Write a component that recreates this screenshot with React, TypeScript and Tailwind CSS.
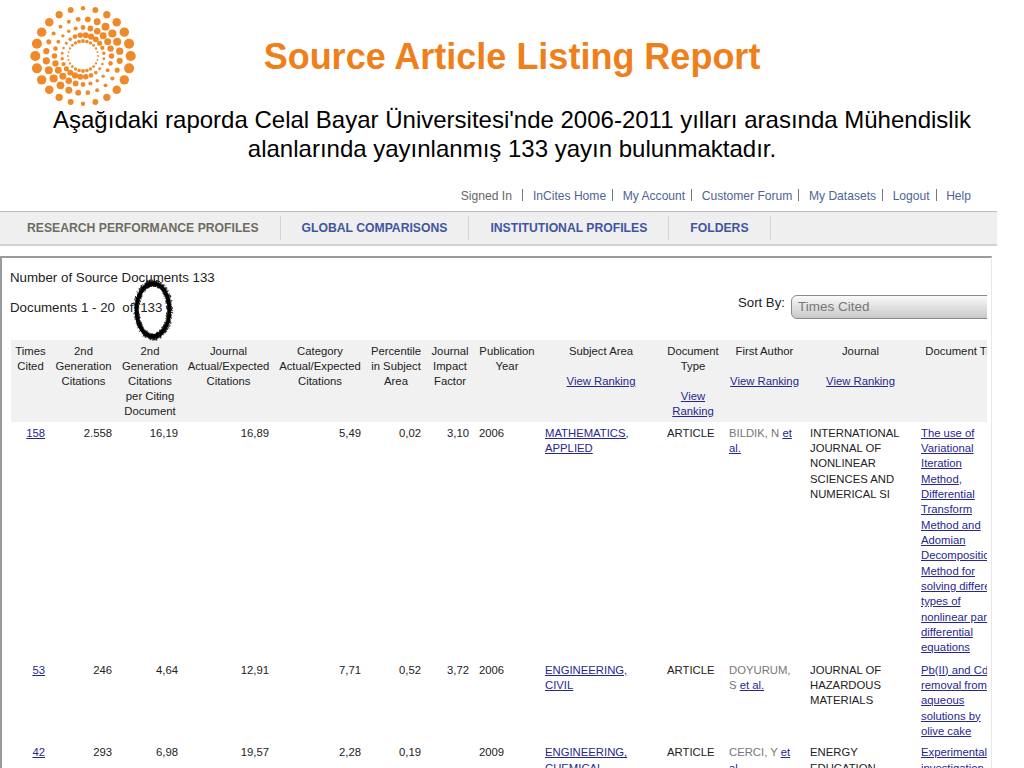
import React from 'react'

const topLinks = ['InCites Home', 'My Account', 'Customer Forum', 'My Datasets', 'Logout', 'Help']

const navItems = [
  { label: 'RESEARCH PERFORMANCE PROFILES', active: true },
  { label: 'GLOBAL COMPARISONS', active: false },
  { label: 'INSTITUTIONAL PROFILES', active: false },
  { label: 'FOLDERS', active: false },
]

const rows = [
  {
    cited: '158', gen: '2.558', perDoc: '16,19', journalRatio: '16,89', catRatio: '5,49', pct: '0,02', impact: '3,10', year: '2006',
    rowClass: 'h-[237px]',
    subject: ['MATHEMATICS,', 'APPLIED'],
    author: 'BILDIK, N', authorBreak: false,
    journal: ['INTERNATIONAL', 'JOURNAL OF', 'NONLINEAR', 'SCIENCES AND', 'NUMERICAL SI'],
    title: ['The use of', 'Variational', 'Iteration', 'Method,', 'Differential', 'Transform', 'Method and', 'Adomian', 'Decomposition', 'Method for', 'solving different', 'types of', 'nonlinear partial', 'differential', 'equations'],
  },
  {
    cited: '53', gen: '246', perDoc: '4,64', journalRatio: '12,91', catRatio: '7,71', pct: '0,52', impact: '3,72', year: '2006',
    rowClass: '',
    subject: ['ENGINEERING,', 'CIVIL'],
    author: 'DOYURUM,', authorBreak: true,
    journal: ['JOURNAL OF', 'HAZARDOUS', 'MATERIALS'],
    title: ['Pb(II) and Cd', 'removal from', 'aqueous', 'solutions by', 'olive cake'],
  },
  {
    cited: '42', gen: '293', perDoc: '6,98', journalRatio: '19,57', catRatio: '2,28', pct: '0,19', impact: '', year: '2009',
    rowClass: '',
    subject: ['ENGINEERING,', 'CHEMICAL'],
    author: 'CERCI, Y', authorBreak: false,
    journal: ['ENERGY', 'EDUCATION', 'SCIENCE AND'],
    title: ['Experimental', 'investigation', 'of'],
  },
]

const rad = Math.PI / 180

// dots per ring, size follows the swirl of the mark
const rings = [
  { r: 47.7, off: 0, size: (t: number) => 2.2 + 2.9 * Math.abs(Math.cos(t)) },
  { r: 37, off: 7.5, size: (t: number) => 3 + 1.1 * Math.cos(2 * (t + 35 * rad)) },
  { r: 28.5, off: 0, size: (t: number) => 2.6 + 0.9 * Math.cos(2 * (t + 40 * rad)) },
  { r: 21, off: 7.5, size: (t: number) => 2.2 + 0.9 * Math.cos(2 * (t + 70 * rad)) },
  { r: 15, off: 0, size: (t: number) => 1.4 + 0.5 * Math.cos(2 * (t + 90 * rad)) },
]

function Logo() {
  return (
    <svg width="106" height="106" viewBox="-53 -53 106 106" className="block">
      {rings.map((ring) =>
        Array.from({ length: 24 }).map((_, i) => {
          const t = (i * 15 + ring.off) * rad
          return (
            <circle
              key={ring.r + '-' + i}
              cx={ring.r * Math.cos(t)}
              cy={ring.r * Math.sin(t)}
              r={ring.size(t)}
              fill="#ef8a2b"
            />
          )
        })
      )}
    </svg>
  )
}

function InkCircle() {
  return (
    <svg width="42" height="62" viewBox="0 0 42 62" className="absolute left-[130px] top-[10px]">
      <ellipse cx="21" cy="31" rx="16.5" ry="26.5" fill="none" stroke="#000" strokeWidth="3.5" />
      {Array.from({ length: 170 }).map((_, i) => {
        const t = (i / 170) * Math.PI * 2
        const jitter = Math.sin(i * 12.9898) * 43758.5453
        const n = jitter - Math.floor(jitter)
        const jitter2 = Math.sin(i * 78.233) * 12543.123
        const m = jitter2 - Math.floor(jitter2)
        return (
          <line
            key={i}
            x1={21 + (16.5 - 2 - m * 1.5) * Math.cos(t)}
            y1={31 + (26.5 - 2 - m * 1.5) * Math.sin(t)}
            x2={21 + (16.5 + 1.5 + n * 2.5) * Math.cos(t + 0.06)}
            y2={31 + (26.5 + 2 + n * 2.5) * Math.sin(t + 0.06)}
            stroke="#000"
            strokeWidth="0.9"
          />
        )
      })}
    </svg>
  )
}

function Lines({ items }: { items: string[] }) {
  return (
    <>
      {items.map((line) => (
        <div key={line} className="whitespace-nowrap">{line}</div>
      ))}
    </>
  )
}

function LinkLines({ items }: { items: string[] }) {
  return (
    <>
      {items.map((line) => (
        <div key={line} className="whitespace-nowrap">
          <a href="#" className="text-[#27278f] underline">{line}</a>
        </div>
      ))}
    </>
  )
}

function Rank({ label }: { label: React.ReactNode }) {
  return <a href="#" className="text-[#27278f] underline">{label}</a>
}

export default function App() {
  const head = 'px-0 pt-[4px] pb-[3px] text-center align-top font-normal leading-[15px]'
  const num = 'pr-[5px] pt-[3.5px] pb-[2.5px] text-right align-top'
  const txt = 'pl-[5px] pt-[3.5px] pb-[2.5px] text-left align-top'

  return (
    <div className="flex h-[768px] w-[1024px] flex-col overflow-hidden bg-white font-['Liberation_Sans',Arial,sans-serif]">
      <div className="grid h-[105px] shrink-0 grid-cols-[1fr_auto_1fr] items-center pt-[3px]">
        <div className="pl-[30px]">
          <Logo />
        </div>
        <h1 className="pt-[2px] text-[36px] font-bold text-[#ef7f1a]">Source Article Listing Report</h1>
        <div />
      </div>

      <p className="text-center text-[24px] leading-[29px] text-black">
        Aşağıdaki raporda Celal Bayar Üniversitesi'nde 2006-2011 yılları arasında Mühendislik
        <br />
        alanlarında yayınlanmış 133 yayın bulunmaktadır.
      </p>

      <div className="mt-[25px] flex h-[16px] w-[971px] items-center justify-end text-[12.1px] text-[#4f6596]">
        <span className="text-[#666]">Signed In</span>
        {topLinks.map((link, i) => (
          <React.Fragment key={link}>
            <span className={i === 0 ? 'mx-[10px] mb-[3px] h-[12px] w-px bg-[#777]' : 'mr-[9.5px] ml-[6px] mb-[3px] h-[12px] w-px bg-[#777]'} />
            <a href="#">{link}</a>
          </React.Fragment>
        ))}
      </div>

      <div className="mt-[7px] flex h-[35px] w-[997px] shrink-0 items-center border-t border-b-2 border-t-[#bdbdbd] border-b-[#d2d2d2] bg-[#efefef] pl-[6px]">
        {navItems.map((item) => (
          <div key={item.label} className="flex h-[24px] items-center border-r border-[#d4d4d4] px-[21px]">
            <span className={item.active ? 'text-[12.2px] font-bold text-[#6d6d5f]' : 'text-[12.2px] font-bold text-[#3f559f]'}>
              {item.label}
            </span>
          </div>
        ))}
      </div>

      <div className="mt-[10px] min-h-0 w-[992px] flex-1 border-t-2 border-r border-l-2 border-t-[#9a9a9a] border-r-[#e8e8e8] border-l-[#9a9a9a]">
        <div className="h-full w-[985px] overflow-hidden text-[11.3px] leading-[15.35px] text-[#222]">
          <div className="flex h-[82px] pt-[11px]">
            <div className="relative w-[736px] shrink-0 pl-[8px] text-[13.3px] leading-[16px] text-[#222]">
              <div className="pt-px">Number of Source Documents 133</div>
              <div className="mt-[14px]">Documents 1 - 20&nbsp; of <span className="ml-[3px]">133</span></div>
              <InkCircle />
            </div>
            <div className="mt-[26px] shrink-0 text-[13.2px] leading-[16px] text-[#222]">Sort By:</div>
            <div className="mt-[26px] ml-[6px] flex h-[24px] w-[260px] shrink-0 items-center rounded-l-md border border-[#8a8a8a] bg-gradient-to-b from-[#fafafa] to-[#c8c8c8] pl-[6px] text-[13.5px] text-[#777]">
              Times Cited
            </div>
          </div>

          <table className="ml-[9px] w-[999px] table-fixed">
            <colgroup>
              <col className="w-[39px]" />
              <col className="w-[67px]" />
              <col className="w-[66px]" />
              <col className="w-[91px]" />
              <col className="w-[92px]" />
              <col className="w-[60px]" />
              <col className="w-[48px]" />
              <col className="w-[66px]" />
              <col className="w-[122px]" />
              <col className="w-[62px]" />
              <col className="w-[81px]" />
              <col className="w-[111px]" />
              <col className="w-[94px]" />
            </colgroup>
            <thead className="bg-[#f1f1f1]">
              <tr>
                <th className={head}>Times<br />Cited</th>
                <th className={head}>2nd<br />Generation<br />Citations</th>
                <th className={head}>2nd<br />Generation<br />Citations<br />per Citing<br />Document</th>
                <th className={head}>Journal<br />Actual/Expected<br />Citations</th>
                <th className={head}>Category<br />Actual/Expected<br />Citations</th>
                <th className={head}>Percentile<br />in Subject<br />Area</th>
                <th className={head}>Journal<br />Impact<br />Factor</th>
                <th className={head}>Publication<br />Year</th>
                <th className={head}>Subject Area<br /><br /><Rank label="View Ranking" /></th>
                <th className={head}>Document<br />Type<br /><br /><Rank label="View" /><br /><Rank label="Ranking" /></th>
                <th className={head}>First Author<br /><br /><Rank label="View Ranking" /></th>
                <th className={head}>Journal<br /><br /><Rank label="View Ranking" /></th>
                <th className={head}>Document Title</th>
              </tr>
            </thead>
            <tbody>
              {rows.map((row) => (
                <tr key={row.cited} className={row.rowClass}>
                  <td className={num}><a href="#" className="text-[#27278f] underline">{row.cited}</a></td>
                  <td className={num}>{row.gen}</td>
                  <td className={num}>{row.perDoc}</td>
                  <td className={num}>{row.journalRatio}</td>
                  <td className={num}>{row.catRatio}</td>
                  <td className={num}>{row.pct}</td>
                  <td className={num}>{row.impact}</td>
                  <td className={txt}>{row.year}</td>
                  <td className={txt}><LinkLines items={row.subject} /></td>
                  <td className={txt}>ARTICLE</td>
                  <td className={txt}>
                    <span className="text-[#777]">{row.author}</span>{' '}
                    {row.authorBreak ? (
                      <>
                        <br />
                        <span className="text-[#777]">S </span>
                        <a href="#" className="text-[#27278f] underline">et al.</a>
                      </>
                    ) : (
                      <a href="#" className="text-[#27278f] underline">et<br />al.</a>
                    )}
                  </td>
                  <td className={txt}><Lines items={row.journal} /></td>
                  <td className={txt}><LinkLines items={row.title} /></td>
                </tr>
              ))}
            </tbody>
          </table>
        </div>
      </div>
    </div>
  )
}
